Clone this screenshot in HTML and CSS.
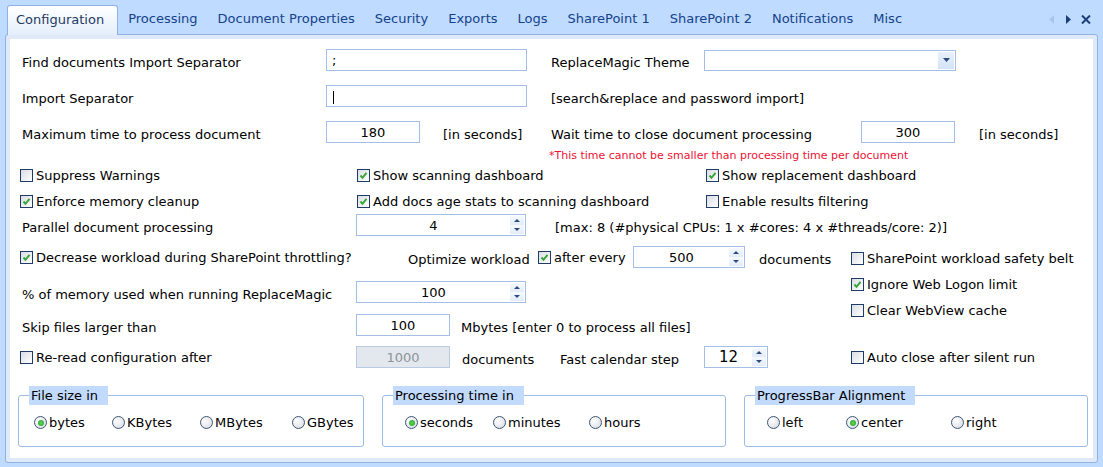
FILE: index.html
```html
<!DOCTYPE html>
<html lang="en">
<head>
    <meta charset="UTF-8">
    <title>ReplaceMagic Configuration</title>
    <link rel="stylesheet" href="styles.css">
</head>
<body>
    <div class="tabstrip">
        <div class="tab active">Configuration</div>
        <div class="tab">Processing</div>
        <div class="tab">Document Properties</div>
        <div class="tab">Security</div>
        <div class="tab">Exports</div>
        <div class="tab">Logs</div>
        <div class="tab">SharePoint 1</div>
        <div class="tab">SharePoint 2</div>
        <div class="tab">Notifications</div>
        <div class="tab">Misc</div>
        <div class="tab-tools">
            <svg width="6" height="9" viewBox="0 0 6 9"><path d="M5 0v9L0 4.5z" fill="#a9c5ec"/></svg>
            <svg width="6" height="9" viewBox="0 0 6 9"><path d="M1 0v9l5-4.5z" fill="#1d3f78"/></svg>
            <svg width="10" height="9" viewBox="0 0 10 9"><path d="M1 0.5l8 8M9 0.5l-8 8" stroke="#1d3f78" stroke-width="2"/></svg>
        </div>
    </div>

    <div class="panel">
        <div class="page">
            <div class="row r1">
                <div class="lbl w306">Find documents Import Separator</div>
                <div class="field w201">;</div>
                <div class="lbl w155 ml22">ReplaceMagic Theme</div>
                <div class="select">
                    <span class="select-btn"><svg width="7" height="4" viewBox="0 0 7 4"><path d="M0 0h7L3.5 4z" fill="#2a4a80"/></svg></span>
                </div>
            </div>

            <div class="row r2">
                <div class="lbl w306">Import Separator</div>
                <div class="field w201"><span class="caret"></span></div>
                <div class="lbl ml22">[search&amp;replace and password import]</div>
            </div>

            <div class="row r3">
                <div class="lbl w306">Maximum time to process document</div>
                <div class="field w94 center">180</div>
                <div class="lbl w108 ml21">[in seconds]</div>
                <div class="lbl w312">Wait time to close document processing</div>
                <div class="field w94 center">300</div>
                <div class="lbl ml22">[in seconds]</div>
            </div>

            <div class="note">*This time cannot be smaller than processing time per document</div>

            <div class="row r4">
                <label class="check w337"><span class="cb"></span>Suppress Warnings</label>
                <label class="check w349"><span class="cb"><svg viewBox="0 0 11 11"><path d="M2.5 5.5l2 2.3 4-5" /></svg></span>Show scanning dashboard</label>
                <label class="check"><span class="cb"><svg viewBox="0 0 11 11"><path d="M2.5 5.5l2 2.3 4-5" /></svg></span>Show replacement dashboard</label>
            </div>

            <div class="row r5">
                <label class="check w337"><span class="cb"><svg viewBox="0 0 11 11"><path d="M2.5 5.5l2 2.3 4-5" /></svg></span>Enforce memory cleanup</label>
                <label class="check w349"><span class="cb"><svg viewBox="0 0 11 11"><path d="M2.5 5.5l2 2.3 4-5" /></svg></span>Add docs age stats to scanning dashboard</label>
                <label class="check"><span class="cb"></span>Enable results filtering</label>
            </div>

            <div class="row r6">
                <div class="lbl w336">Parallel document processing</div>
                <div class="spin w170"><span class="spin-val">4</span><span class="spin-btns"><i class="up"></i><i class="dn"></i></span></div>
                <div class="lbl ml27">[max: 8 (#physical CPUs: 1 x #cores: 4 x #threads/core: 2)]</div>
            </div>

            <div class="lower">
                <div class="lower-left">
                    <div class="row r7">
                        <label class="check w386"><span class="cb"><svg viewBox="0 0 11 11"><path d="M2.5 5.5l2 2.3 4-5" /></svg></span>Decrease workload during SharePoint throttling?</label>
                        <div class="lbl w132">Optimize workload</div>
                        <label class="check w95"><span class="cb"><svg viewBox="0 0 11 11"><path d="M2.5 5.5l2 2.3 4-5" /></svg></span>after every</label>
                        <div class="spin w112"><span class="spin-val">500</span><span class="spin-btns"><i class="up"></i><i class="dn"></i></span></div>
                        <div class="lbl ml12">documents</div>
                    </div>
                    <div class="row r8">
                        <div class="lbl w336">% of memory used when running ReplaceMagic</div>
                        <div class="spin w170"><span class="spin-val">100</span><span class="spin-btns"><i class="up"></i><i class="dn"></i></span></div>
                    </div>
                    <div class="row r9">
                        <div class="lbl w336">Skip files larger than</div>
                        <div class="field w94 center">100</div>
                        <div class="lbl ml9">Mbytes [enter 0 to process all files]</div>
                    </div>
                    <div class="row r10">
                        <label class="check w336"><span class="cb"></span>Re-read configuration after</label>
                        <div class="field w94 center disabled">1000</div>
                        <div class="lbl w98 ml10">documents</div>
                        <div class="lbl w146">Fast calendar step</div>
                        <div class="spin w64 big"><span class="spin-val">12</span><span class="spin-btns"><i class="up"></i><i class="dn"></i></span></div>
                    </div>
                </div>
                <div class="lower-right">
                    <label class="check"><span class="cb"></span>SharePoint workload safety belt</label>
                    <label class="check"><span class="cb"><svg viewBox="0 0 11 11"><path d="M2.5 5.5l2 2.3 4-5" /></svg></span>Ignore Web Logon limit</label>
                    <label class="check"><span class="cb"></span>Clear WebView cache</label>
                    <label class="check last"><span class="cb"></span>Auto close after silent run</label>
                </div>
            </div>

            <div class="groups">
                <fieldset class="group g-size">
                    <legend>File size in</legend>
                    <label class="radio"><span class="rb on"></span>bytes</label>
                    <label class="radio"><span class="rb"></span>KBytes</label>
                    <label class="radio"><span class="rb"></span>MBytes</label>
                    <label class="radio"><span class="rb"></span>GBytes</label>
                </fieldset>
                <fieldset class="group g-time">
                    <legend>Processing time in</legend>
                    <label class="radio"><span class="rb on"></span>seconds</label>
                    <label class="radio"><span class="rb"></span>minutes</label>
                    <label class="radio"><span class="rb"></span>hours</label>
                </fieldset>
                <fieldset class="group g-align">
                    <legend>ProgressBar Alignment</legend>
                    <label class="radio"><span class="rb"></span>left</label>
                    <label class="radio"><span class="rb on"></span>center</label>
                    <label class="radio"><span class="rb"></span>right</label>
                </fieldset>
            </div>
        </div>
    </div>
</body>
</html>
```

FILE: styles.css
```css
* {
    box-sizing: border-box;
    margin: 0;
    padding: 0;
}

body {
    background-color: #bfdbff;
    font-family: 'DejaVu Sans', Verdana, sans-serif;
    font-size: 13px;
    color: #000;
    width: 1103px;
    height: 467px;
    overflow: hidden;
}

/* Tab strip */
.tabstrip {
    display: flex;
    align-items: flex-end;
    height: 34px;
    position: relative;
}

.tab {
    height: 29px;
    line-height: 28px;
    padding: 0 10px;
    color: #15428b;
    white-space: nowrap;
}

.tab.active {
    margin-left: 7px;
    padding: 0 13px 0 8px;
    height: 30px;
    margin-bottom: -1px;
    background: linear-gradient(#ffffff, #e4eefb);
    border: 1px solid #8db2e3;
    border-bottom: none;
    border-radius: 3px 3px 0 0;
    color: #1e3a64;
    position: relative;
    z-index: 2;
}

.tab-tools {
    margin-left: auto;
    margin-right: 12px;
    display: flex;
    align-items: center;
    gap: 10px;
    height: 29px;
}

/* Panel */
.panel {
    margin: 0 5px 0 5px;
    height: 429px;
    border: 1px solid #8db2e3;
    border-radius: 3px;
    background-color: #dfe9f8;
    padding: 4px;
}

.page {
    background-color: #fff;
    height: 100%;
    padding: 10px 0 0 10px;
}

/* Rows */
.row {
    display: flex;
    align-items: center;
    height: 22px;
    white-space: nowrap;
}

.r2, .r3 { margin-top: 14px; }
.r4 { margin-top: 2px; height: 20px; }
.r5 { margin-top: 6px; height: 20px; }
.r6 { margin-top: 3px; }

.lbl {
    padding: 4px 0 0 2px;
    flex-shrink: 0;
}

.note {
    margin: 6px 0 0 529px;
    height: 14px;
    line-height: 14px;
    font-size: 11px;
    color: #ee1133;
}

.w64 { width: 64px; }
.w94 { width: 94px; }
.w95 { width: 95px; }
.w98 { width: 98px; }
.w108 { width: 108px; }
.w112 { width: 112px; }
.w132 { width: 132px; }
.w146 { width: 146px; }
.w155 { width: 155px; }
.w170 { width: 170px; }
.w201 { width: 201px; }
.w306 { width: 306px; }
.w312 { width: 312px; }
.w336 { width: 336px; }
.w337 { width: 337px; }
.w349 { width: 349px; }
.w386 { width: 386px; }

.ml9 { margin-left: 9px; }
.ml10 { margin-left: 10px; }
.ml12 { margin-left: 12px; }
.ml21 { margin-left: 21px; }
.ml22 { margin-left: 22px; }
.ml27 { margin-left: 27px; }

/* Inputs */
.field {
    height: 22px;
    line-height: 21px;
    border: 1px solid #a4bfe6;
    background-color: #fff;
    padding: 0 5px;
    flex-shrink: 0;
}

.field.center {
    text-align: center;
}

.field.disabled {
    background-color: #e3e8ef;
    border-color: #b9cbe2;
    color: #8d9298;
}

.caret {
    display: inline-block;
    width: 1px;
    height: 13px;
    background-color: #000;
    vertical-align: middle;
    margin-left: 1px;
}

.select {
    width: 252px;
    height: 21px;
    border: 1px solid #a4bfe6;
    display: flex;
    justify-content: flex-end;
    padding: 1px;
}

.select-btn {
    width: 16px;
    background: linear-gradient(#e9f1fc, #d3e2f6);
    display: flex;
    align-items: center;
    justify-content: center;
}

.spin {
    height: 22px;
    border: 1px solid #a4bfe6;
    display: flex;
    flex-shrink: 0;
    background-color: #fff;
}

.spin-val {
    flex: 1;
    text-align: center;
    line-height: 21px;
}

.spin.big .spin-val {
    font-size: 15px;
}

.spin-btns {
    width: 15px;
    display: flex;
    flex-direction: column;
    padding: 1px 1px 1px 0;
}

.spin-btns i {
    flex: 1;
    position: relative;
    background: linear-gradient(#f6f9fe, #e2ebf8);
}

.spin-btns i::after {
    content: '';
    position: absolute;
    left: 4px;
    border-left: 3px solid transparent;
    border-right: 3px solid transparent;
}

.spin-btns .up::after {
    top: 3px;
    border-bottom: 3px solid #2a4a80;
}

.spin-btns .dn::after {
    top: 3px;
    border-top: 3px solid #2a4a80;
}

/* Checkboxes */
.check {
    display: flex;
    align-items: center;
    height: 20px;
    flex-shrink: 0;
    white-space: nowrap;
}

.cb {
    width: 13px;
    height: 13px;
    border: 1px solid #1e3c66;
    background: linear-gradient(135deg, #d9dde3, #ffffff);
    margin-right: 3px;
    display: flex;
    align-items: center;
    justify-content: center;
}

.cb svg {
    width: 11px;
    height: 11px;
}

.cb path {
    fill: none;
    stroke: #3aa63a;
    stroke-width: 2;
}

/* Lower section */
.lower {
    display: flex;
    margin-top: 10px;
}

.lower-left {
    width: 831px;
}

.r8 { margin-top: 13px; }
.r9 { margin-top: 11px; }
.r10 { margin-top: 10px; }

.lower-right {
    display: flex;
    flex-direction: column;
    gap: 6px;
    padding-top: 2px;
}

.lower-right .last {
    margin-top: 21px;
}

/* Radio groups */
.groups {
    display: flex;
    gap: 18px;
    margin: 18px 0 0 -2px;
}

.group {
    border: 1px solid #9cbce8;
    border-radius: 3px;
    width: 344px;
    height: 61px;
    display: grid;
    align-items: center;
    padding: 6px 0 12px 22px;
}

.group legend {
    background-color: #c2dbfd;
    margin-left: -12px;
    padding: 0 10px 0 2px;
    height: 19px;
    line-height: 19px;
}

.g-size {
    width: 346px;
    padding-left: 15px;
    grid-template-columns: 78px 88px 92px 1fr;
}

.g-size legend {
    margin-left: -5px;
}

.g-time {
    grid-template-columns: 88px 96px 1fr;
}

.g-align {
    grid-template-columns: 79px 105px 1fr;
}

.radio {
    display: flex;
    align-items: center;
    height: 20px;
    white-space: nowrap;
}

.rb {
    width: 13px;
    height: 13px;
    border-radius: 50%;
    border: 1px solid #3f5573;
    background: radial-gradient(circle at 35% 35%, #ffffff, #d4d8de);
    margin-right: 2px;
    display: flex;
    align-items: center;
    justify-content: center;
}

.rb.on::after {
    content: '';
    width: 6px;
    height: 6px;
    border-radius: 50%;
    background: radial-gradient(circle, #5ed45e, #22a022);
}
```
